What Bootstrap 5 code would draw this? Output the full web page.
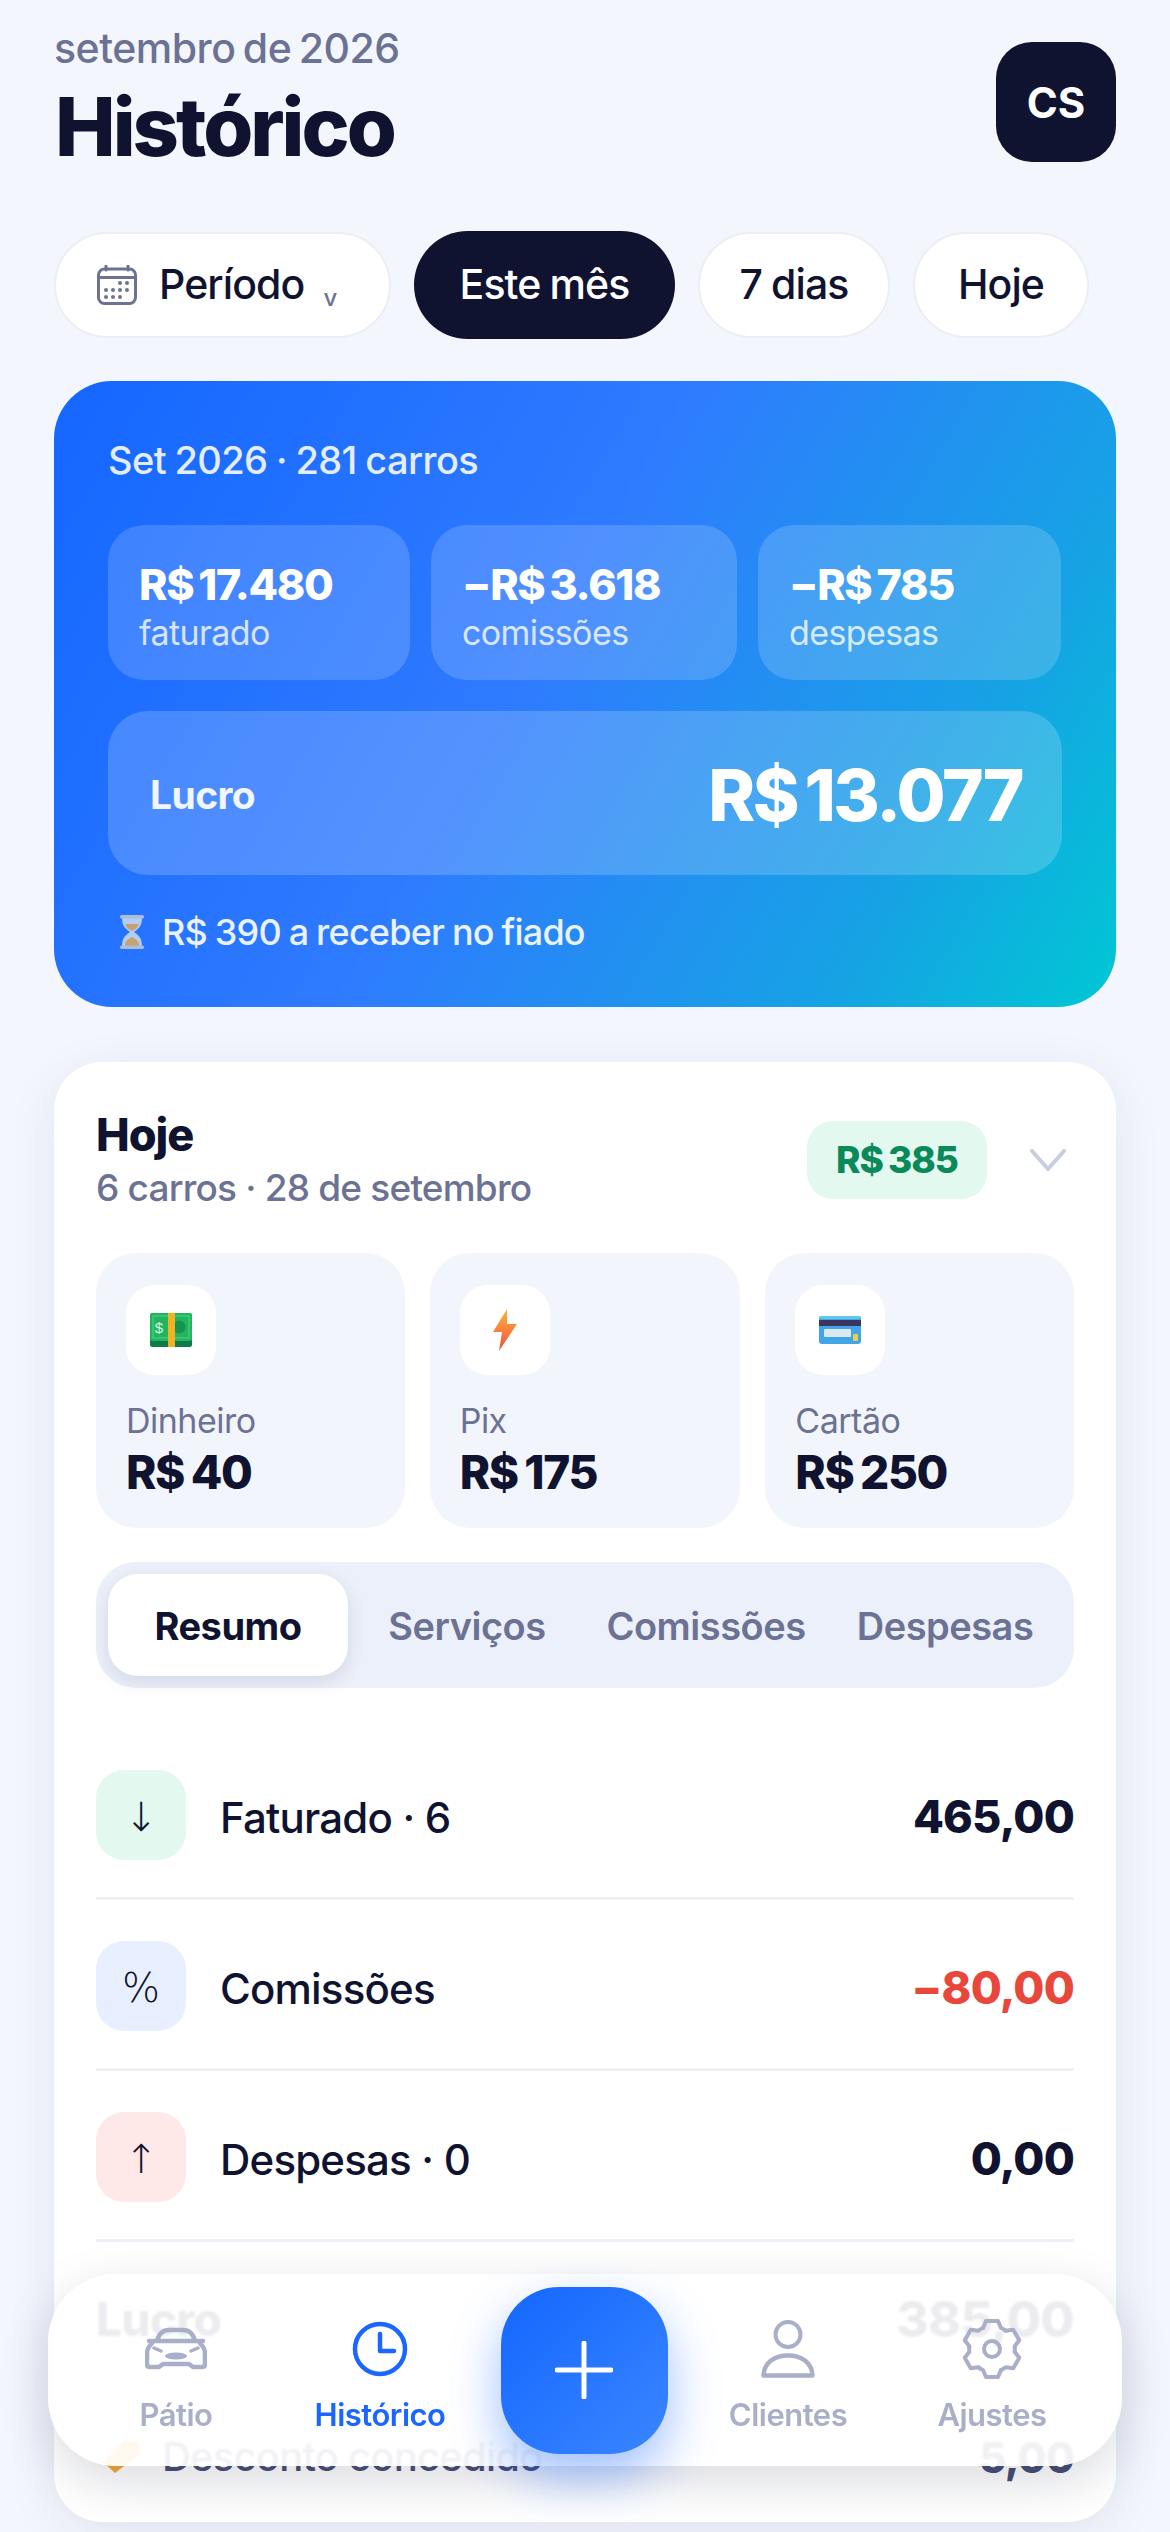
<!DOCTYPE html>
<html lang="pt-BR">
<head>
<meta charset="UTF-8">
<meta name="viewport" content="width=device-width, initial-scale=1.0">
<title>Histórico</title>
<link href="https://cdn.jsdelivr.net/npm/bootstrap@5.3.0/dist/css/bootstrap.min.css" rel="stylesheet">
<style>
    :root { --ink: #0f1330; --muted: #6c7293; --soft: #f3f5fc; --blue: #1a66ff; }
    html, body { height: 2532px; overflow: hidden; }
    body { background: #f3f6fd; color: var(--ink); font-family: "Inter", "Liberation Sans", sans-serif; }
    .app-shell { position: relative; height: 2532px; overflow: hidden; padding: 0 54px; }

    .top-head { height: 231px; padding-top: 26px; }
    .top-month { font-size: 41px; line-height: 44px; font-weight: 500; color: var(--muted); letter-spacing: -.5px; word-spacing: -3px; }
    .top-title { font-size: 81px; line-height: 88px; font-weight: 800; letter-spacing: -3px; margin: 13px 0 0 1px; }
    .top-avatar { width: 120px; height: 120px; margin-top: 16px; border-radius: 36px; background: var(--ink); color: #fff; font-size: 42px; font-weight: 700; }

    .chip-row { gap: 23px; height: 108px; }
    .chip-item { height: 106px; border-radius: 53px; background: #fff; border: 2px solid #eceef5; font-size: 41px; font-weight: 500; letter-spacing: -.9px; word-spacing: -1px; color: var(--ink); }
    .chip-period { width: 337px; padding-left: 41px; gap: 22px; }
    .chip-period small { font-size: 24px; color: var(--muted); margin: 26px 0 0 -3px; }
    .chip-active { width: 261px; height: 108px; border: 0; border-radius: 54px; background: var(--ink); color: #fff; }
    .chip-week { width: 192px; }
    .chip-today { width: 176px; }

    .hero-box { margin-top: 42px; height: 626px; border-radius: 58px; padding: 54px; color: #fff; background: linear-gradient(120deg, #1466ff 0%, #2f7bff 45%, #16a3e4 80%, #00c8d4 100%); }
    .hero-line { font-size: 38px; line-height: 50px; font-weight: 500; opacity: .88; letter-spacing: -.6px; word-spacing: -1px; }
    .stat-row { gap: 21px; margin-top: 40px; }
    .stat-box { height: 155px; border-radius: 36px; background: rgba(255,255,255,.16); padding: 33px 0 0 31px; }
    .stat-val { font-size: 43px; line-height: 52px; font-weight: 800; letter-spacing: -1.3px; word-spacing: -3px; }
    .stat-lbl { font-size: 34px; line-height: 40px; margin-top: 3px; opacity: .78; letter-spacing: -.6px; }
    .profit-box { height: 164px; margin-top: 31px; border-radius: 40px; background: rgba(255,255,255,.18); padding: 5px 40px 0 42px; }
    .profit-lbl { font-size: 39px; font-weight: 700; opacity: .92; letter-spacing: -.6px; }
    .profit-val { font-size: 71px; font-weight: 800; letter-spacing: -2.4px; word-spacing: -6px; }
    .hero-note { margin-top: 32px; padding-left: 10px; gap: 16px; font-size: 36px; line-height: 50px; font-weight: 500; opacity: .9; letter-spacing: -.8px; word-spacing: -1px; }

    .day-card { margin-top: 55px; height: 1460px; border-radius: 48px; background: #fff; padding: 46px 42px 0; box-shadow: 0 12px 50px rgba(30,40,90,.08); }
    .day-title { font-size: 45px; line-height: 54px; font-weight: 800; letter-spacing: -1px; }
    .day-sub { font-size: 37px; line-height: 46px; margin-top: 3px; font-weight: 500; color: var(--muted); letter-spacing: -.8px; }
    .day-pill { width: 180px; height: 78px; border-radius: 26px; background: #e3f8ee; color: #0a8a5a; font-size: 37px; font-weight: 800; letter-spacing: -1px; word-spacing: -2px; }
    .day-chev { margin-left: 43px; margin-right: 8px; }

    .pay-row { gap: 25px; margin-top: 42px; }
    .pay-box { height: 275px; border-radius: 40px; background: var(--soft); padding: 32px 0 0 30px; }
    .pay-icon { width: 90px; height: 90px; border-radius: 28px; background: #fff; }
    .pay-lbl { font-size: 34px; line-height: 42px; margin-top: 25px; color: var(--muted); letter-spacing: -.5px; }
    .pay-val { font-size: 46px; line-height: 56px; margin-top: 2px; font-weight: 800; color: var(--ink); letter-spacing: -1.4px; word-spacing: -2px; }

    .tab-strip { height: 126px; margin-top: 34px; border-radius: 40px; background: #ecf0fa; padding: 12px; }
    .tab-item { font-size: 38px; font-weight: 600; color: var(--muted); letter-spacing: -.5px; height: 102px; padding-top: 3px; }
    .tab-on { width: 240px; border-radius: 30px; background: #fff; color: var(--ink); font-weight: 700; box-shadow: 0 6px 18px rgba(30,40,90,.12); }
    .tab-a { width: 160px; margin-left: 39px; }
    .tab-b { width: 202px; margin-left: 58px; }
    .tab-c { width: 180px; margin-left: 48px; }

    .line-list { margin-top: 41px; }
    .line-item { height: 171px; padding-top: 41px; border-bottom: 3px solid #edf0f7; }
    .line-ico { width: 90px; height: 90px; padding-top: 3px; border-radius: 28px; font-size: 40px; font-family: "DejaVu Sans", sans-serif; font-weight: 300; }
    .ico-green { background: #e3f8ee; }
    .ico-blue { background: #e8effe; }
    .ico-red { background: #ffe8e8; }
    .line-lbl { margin: 4px 0 0 34px; font-size: 42px; font-weight: 500; letter-spacing: -.8px; }
    .line-val { margin-top: 4px; font-size: 45px; font-weight: 800; letter-spacing: -.8px; }
    .val-red { color: #e8483c; }
    .line-row { height: 90px; }
    .profit-row { height: 90px; margin-top: 30px; }
    .profit-row .line-lbl { margin-left: 0; font-size: 46px; font-weight: 800; }
    .profit-row .line-val { font-size: 50px; }
    .off-row { height: 60px; margin-top: 65px; padding-left: 7px; }
    .off-row .line-lbl { margin: 0 0 0 22px; font-size: 40px; color: #4a4f78; }
    .off-row .line-val { margin-top: 0; font-size: 42px; color: #4a4f78; }

    .dock-bar { position: absolute; left: 48px; top: 2274px; width: 1074px; height: 192px; border-radius: 68px; background: rgba(255,255,255,.92); padding: 0 26px; backdrop-filter: blur(1px); box-shadow: 0 16px 50px rgba(15,20,50,.15); }
    .dock-item { width: 204px; padding-top: 16px; font-size: 31px; font-weight: 600; color: #a9afc9; letter-spacing: -.5px; }
    .dock-item svg { display: block; margin: 0 auto 12px; height: 62px; }
    .dock-on { color: var(--blue); }
    .dock-add { width: 167px; height: 167px; margin: 0 18.5px; border-radius: 58px; background: linear-gradient(135deg, #1466ff, #3a86ff); box-shadow: 0 22px 50px rgba(26,102,255,.42); }
</style>
</head>
<body>
<div class="app-shell">
    <header class="top-head d-flex justify-content-between align-items-start">
        <div>
            <div class="top-month">setembro de 2026</div>
            <h1 class="top-title">Histórico</h1>
        </div>
        <div class="top-avatar d-flex align-items-center justify-content-center">CS</div>
    </header>

    <div class="chip-row d-flex align-items-center">
        <div class="chip-item chip-period d-flex align-items-center">
            <svg width="40" height="40" viewBox="0 0 40 40" fill="none">
                <rect x="1.5" y="4" width="37" height="34.5" rx="6" stroke="#6c7293" stroke-width="3"/>
                <path d="M1.5 12.5h37M9 1v4M31 1v4" stroke="#6c7293" stroke-width="3" stroke-linecap="round"/>
                <g fill="#6c7293"><circle cx="23" cy="18" r="2"/><circle cx="30" cy="18" r="2"/><circle cx="9" cy="25" r="2"/><circle cx="16" cy="25" r="2"/><circle cx="23" cy="25" r="2"/><circle cx="30" cy="25" r="2"/><circle cx="9" cy="32" r="2"/><circle cx="16" cy="32" r="2"/><circle cx="23" cy="32" r="2"/></g>
            </svg>
            <span>Período</span>
            <small>v</small>
        </div>
        <div class="chip-item chip-active d-flex align-items-center justify-content-center">Este mês</div>
        <div class="chip-item chip-week d-flex align-items-center justify-content-center">7 dias</div>
        <div class="chip-item chip-today d-flex align-items-center justify-content-center">Hoje</div>
    </div>

    <section class="hero-box">
        <div class="hero-line">Set 2026 · 281 carros</div>
        <div class="stat-row d-flex">
            <div class="stat-box" style="width:302px"><div class="stat-val">R$ 17.480</div><div class="stat-lbl">faturado</div></div>
            <div class="stat-box" style="width:306px"><div class="stat-val">−R$ 3.618</div><div class="stat-lbl">comissões</div></div>
            <div class="stat-box" style="width:303px"><div class="stat-val">−R$ 785</div><div class="stat-lbl">despesas</div></div>
        </div>
        <div class="profit-box d-flex align-items-center justify-content-between">
            <span class="profit-lbl">Lucro</span>
            <span class="profit-val">R$ 13.077</span>
        </div>
        <div class="hero-note d-flex align-items-center">
            <svg width="28" height="36" viewBox="0 0 28 36">
                <path d="M4 3h20c0 8-2 11-8 15 6 4 8 7 8 15H4c0-8 2-11 8-15C6 14 4 11 4 3z" fill="#dfe9f5" opacity=".85"/>
                <path d="M7 10h14c-1 3-3 5-7 7-4-2-6-4-7-7zM14 23c-4 2-7 4-7 9h14c0-5-3-7-7-9z" fill="#d8a860"/>
                <rect x="2" y="1" width="24" height="3.5" rx="1.5" fill="#b9c6d6"/>
                <rect x="2" y="31.5" width="24" height="3.5" rx="1.5" fill="#b9c6d6"/>
            </svg>
            <span>R$ 390 a receber no fiado</span>
        </div>
    </section>

    <section class="day-card">
        <div class="d-flex align-items-center">
            <div class="flex-grow-1">
                <div class="day-title">Hoje</div>
                <div class="day-sub">6 carros · 28 de setembro</div>
            </div>
            <div class="day-pill d-flex align-items-center justify-content-center">R$ 385</div>
            <svg class="day-chev" width="36" height="22" viewBox="0 0 36 22" fill="none"><path d="M2 2l16 18L34 2" stroke="#c8cde0" stroke-width="4" stroke-linecap="round" stroke-linejoin="round"/></svg>
        </div>

        <div class="pay-row d-flex">
            <div class="pay-box" style="width:309px">
                <div class="pay-icon d-flex align-items-center justify-content-center">
                    <svg width="42" height="34" viewBox="0 0 42 34">
                        <rect width="42" height="34" rx="2.5" fill="#0f7a48"/>
                        <rect width="42" height="28" rx="2.5" fill="#22b560"/>
                        <rect x="3" y="3" width="36" height="22" fill="none" stroke="#52cf85" stroke-width="1"/>
                        <circle cx="29" cy="14" r="6.5" fill="#179350"/>
                        <rect x="18" width="7" height="34" fill="#f3b21f"/>
                        <text x="9" y="20" font-size="15" font-family="Liberation Sans, sans-serif" fill="#d8f7e4" text-anchor="middle">$</text>
                    </svg>
                </div>
                <div class="pay-lbl">Dinheiro</div>
                <div class="pay-val">R$ 40</div>
            </div>
            <div class="pay-box" style="width:311px">
                <div class="pay-icon d-flex align-items-center justify-content-center">
                    <svg width="24" height="42" viewBox="0 0 24 42">
                        <defs><linearGradient id="boltFill" x1="0" y1="0" x2="0" y2="1"><stop offset="0" stop-color="#fbb43c"/><stop offset="1" stop-color="#f0503c"/></linearGradient></defs>
                        <path d="M14 0L0 23h9l-3 19 18-27H14z" fill="url(#boltFill)"/>
                    </svg>
                </div>
                <div class="pay-lbl">Pix</div>
                <div class="pay-val">R$ 175</div>
            </div>
            <div class="pay-box" style="width:309px">
                <div class="pay-icon d-flex align-items-center justify-content-center">
                    <svg width="42" height="28" viewBox="0 0 42 28">
                        <rect width="42" height="28" rx="3" fill="#42a5e8"/>
                        <rect y="0" width="42" height="3" rx="1.5" fill="#62c6ee"/>
                        <rect y="4" width="42" height="6" fill="#3a3560"/>
                        <rect x="5" y="13" width="27" height="8" rx="1" fill="#dce8f0"/>
                        <rect x="34" y="18" width="5" height="7" rx="1" fill="#e9cf4f"/>
                    </svg>
                </div>
                <div class="pay-lbl">Cartão</div>
                <div class="pay-val">R$ 250</div>
            </div>
        </div>

        <div class="tab-strip d-flex">
            <div class="tab-item tab-on d-flex align-items-center justify-content-center">Resumo</div>
            <div class="tab-item tab-a d-flex align-items-center justify-content-center">Serviços</div>
            <div class="tab-item tab-b d-flex align-items-center justify-content-center">Comissões</div>
            <div class="tab-item tab-c d-flex align-items-center justify-content-center">Despesas</div>
        </div>

        <div class="line-list">
            <div class="line-item">
                <div class="line-row d-flex align-items-center">
                    <div class="line-ico ico-green d-flex align-items-center justify-content-center">↓</div>
                    <span class="line-lbl flex-grow-1">Faturado · 6</span>
                    <span class="line-val">465,00</span>
                </div>
            </div>
            <div class="line-item">
                <div class="line-row d-flex align-items-center">
                    <div class="line-ico ico-blue d-flex align-items-center justify-content-center">%</div>
                    <span class="line-lbl flex-grow-1">Comissões</span>
                    <span class="line-val val-red">−80,00</span>
                </div>
            </div>
            <div class="line-item">
                <div class="line-row d-flex align-items-center">
                    <div class="line-ico ico-red d-flex align-items-center justify-content-center">↑</div>
                    <span class="line-lbl flex-grow-1">Despesas · 0</span>
                    <span class="line-val">0,00</span>
                </div>
            </div>
            <div class="profit-row d-flex align-items-center">
                <span class="line-lbl flex-grow-1">Lucro</span>
                <span class="line-val">385,00</span>
            </div>
            <div class="off-row d-flex align-items-center">
                <svg width="37" height="32" viewBox="0 0 37 32"><path d="M12 32L0 21 21 0h16v13z" fill="#f0a93c"/></svg>
                <span class="line-lbl flex-grow-1">Desconto concedido</span>
                <span class="line-val">5,00</span>
            </div>
        </div>
    </section>

    <nav class="dock-bar d-flex align-items-center">
        <div class="dock-item text-center">
            <svg width="62" height="62" viewBox="0 -10 62 62" fill="none">
                <path d="M12 13c2-8 6-11 12-11h14c6 0 10 3 12 11" stroke="#a9afc9" stroke-width="4.5"/>
                <path d="M4 13h54" stroke="#a9afc9" stroke-width="4.5" stroke-linecap="round"/>
                <path d="M8 14c-4 4-6 7-6 11v11c0 2 1 3 3 3h9l4-3h26l4 3h9c2 0 3-1 3-3V25c0-4-2-7-6-11" stroke="#a9afc9" stroke-width="4.5" stroke-linejoin="round"/>
                <path d="M9 20l7 3M53 20l-7 3" stroke="#a9afc9" stroke-width="3.5" stroke-linecap="round"/>
                <ellipse cx="31" cy="28" rx="11" ry="3.5" fill="#a9afc9"/>
            </svg>
            Pátio
        </div>
        <div class="dock-item dock-on text-center">
            <svg width="56" height="62" viewBox="0 0 56 62" fill="none">
                <circle cx="28" cy="31" r="25" stroke="#1a66ff" stroke-width="4.5"/>
                <path d="M28 16v17h14" stroke="#1a66ff" stroke-width="4.5" stroke-linecap="round" stroke-linejoin="round"/>
            </svg>
            Histórico
        </div>
        <div class="dock-add d-flex align-items-center justify-content-center">
            <svg width="58" height="58" viewBox="0 0 58 58"><path d="M29 2v54M2 29h54" stroke="#fff" stroke-width="5" stroke-linecap="round"/></svg>
        </div>
        <div class="dock-item text-center">
            <svg width="54" height="62" viewBox="0 -2 54 62" fill="none">
                <ellipse cx="27" cy="14.5" rx="12.5" ry="12.5" stroke="#a9afc9" stroke-width="4"/>
                <path d="M2.5 55.500C3 43 13 35.500 27 35.500S51 43 51.500 55.500z" stroke="#a9afc9" stroke-width="4.500" stroke-linejoin="round"/>
            </svg>
            Clientes
        </div>
        <div class="dock-item text-center">
            <svg width="60" height="62" viewBox="-30 -31 60 62" fill="none" stroke="#a9afc9" stroke-width="4" stroke-linecap="round" stroke-linejoin="round">
                <path id="gearTooth" d="M-9-21L-6-28H6L9-21Q11.500-20 13.700-18.300"/>
                <use href="#gearTooth" transform="rotate(60)"/>
                <use href="#gearTooth" transform="rotate(120)"/>
                <use href="#gearTooth" transform="rotate(180)"/>
                <use href="#gearTooth" transform="rotate(240)"/>
                <use href="#gearTooth" transform="rotate(300)"/>
                <circle r="8"/>
            </svg>
            Ajustes
        </div>
    </nav>
</div>
<script src="https://cdn.jsdelivr.net/npm/bootstrap@5.3.0/dist/js/bootstrap.bundle.min.js"></script>
</body>
</html>
